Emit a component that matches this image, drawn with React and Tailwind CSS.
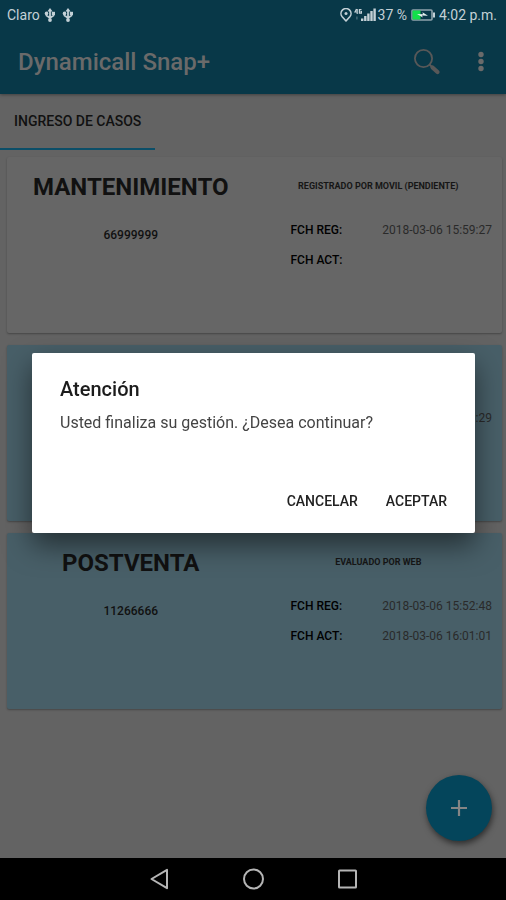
import { useState } from "react";

const cases = [
  {
    id: 1,
    type: "MANTENIMIENTO",
    number: "66999999",
    status: "REGISTRADO POR MOVIL (PENDIENTE)",
    rows: [
      ["FCH REG:", "2018-03-06 15:59:27"],
      ["FCH ACT:", ""],
    ],
    reviewed: false,
  },
  {
    id: 2,
    type: "",
    number: "",
    status: "",
    rows: [["", ":29"]],
    reviewed: true,
  },
  {
    id: 3,
    type: "POSTVENTA",
    number: "11266666",
    status: "EVALUADO POR WEB",
    rows: [
      ["FCH REG:", "2018-03-06 15:52:48"],
      ["FCH ACT:", "2018-03-06 16:01:01"],
    ],
    reviewed: true,
  },
];

function UsbIcon() {
  return (
    <svg viewBox="0 0 12 14" className="w-3 h-3.5" fill="none" stroke="currentColor" strokeWidth="1.8">
      <path d="M6 3v9M2.5 6v1.5L6 10l3.5-2.5V5.5" />
      <path d="M6 0l2.6 3.6H3.4z" fill="currentColor" stroke="none" />
      <circle cx="2.5" cy="5.4" r="1.8" fill="currentColor" stroke="none" />
      <path d="M7.8 3.8h3.2v3.2H7.8z" fill="currentColor" stroke="none" />
      <circle cx="6" cy="12" r="1.9" fill="currentColor" stroke="none" />
    </svg>
  );
}

function StatusBar() {
  return (
    <div className="flex h-[30px] items-center justify-between pl-[7px] pr-[9px] text-sm text-[#c3d0d6]">
      <div className="flex items-center">
        <span>Claro</span>
        <span className="ml-1 flex gap-1.5">
          <UsbIcon />
          <UsbIcon />
        </span>
      </div>
      <div className="flex items-center">
        <svg viewBox="0 0 12 14" className="w-3 h-3.5" fill="none" stroke="currentColor" strokeWidth="1.6">
          <path d="M6 13L2.2 8.8A5 5 0 1 1 9.8 8.8z" strokeLinejoin="round" />
          <circle cx="6" cy="5.6" r="1.5" fill="currentColor" stroke="none" />
        </svg>
        <svg viewBox="0 0 22 14" className="ml-0.5 w-[22px] h-3.5" fill="currentColor">
          <path d="M2.5 1L1 4h2.6M3.2 1v5M7.5 1.6H5.4v3.6h2V3.6H6.4" fill="none" stroke="currentColor" strokeWidth="1.2" />
          <path d="M2.2 8.5h1.4v3H2.2z" opacity="0.35" />
          <path d="M7 10.5h2.4V13H7zM10.1 8h2.4v5h-2.4zM13.2 5.5h2.4V13h-2.4zM16.3 3h2.4v10h-2.4zM19.4 .5h2.4V13h-2.4z" />
        </svg>
        <span className="ml-0.5">37 %</span>
        <svg viewBox="0 0 24 12" className="ml-1 w-6 h-3">
          <rect x="1" y="1" width="20" height="10" rx="1" fill="none" stroke="#8fa3ac" strokeWidth="1.6" />
          <rect x="1.5" y="1.5" width="8" height="9" fill="#12e04a" />
          <rect x="22" y="3.5" width="2" height="5" fill="#c3d0d6" />
          <path d="M6 5l6 .3-.6-2L17 6.8l-6-.2.8 2z" fill="#e6f2ee" />
        </svg>
        <span className="ml-1">4:02 p.m.</span>
      </div>
    </div>
  );
}

function Toolbar() {
  return (
    <div className="flex h-16 items-center justify-between pl-[18px] pr-[11px]">
      <h1 className="text-2xl font-medium text-[#6a6a6a]">Dynamicall Snap+</h1>
      <div className="flex items-center gap-[26px]">
        <button aria-label="Buscar" className="text-[#585858]">
          <svg viewBox="0 0 28 28" className="size-7" fill="none" stroke="currentColor">
            <circle cx="10.5" cy="10.5" r="8.6" strokeWidth="1.8" />
            <path d="M16.5 16.5l3 3" strokeWidth="1.8" />
            <path d="M19.5 19.5l5 4.5" strokeWidth="4.2" strokeLinecap="round" />
          </svg>
        </button>
        <button aria-label="Más opciones" className="text-[#6a6a6a]">
          <svg viewBox="0 0 28 28" className="size-7" fill="currentColor">
            <circle cx="14" cy="6.5" r="2.7" />
            <circle cx="14" cy="13.5" r="2.7" />
            <circle cx="14" cy="20.5" r="2.7" />
          </svg>
        </button>
      </div>
    </div>
  );
}

function CaseCard({ item }) {
  return (
    <article
      className={`flex h-44 rounded-xs pt-3.5 shadow-[0_1px_2px_rgba(0,0,0,0.3)] ${
        item.reviewed ? "bg-[#485f68]" : "bg-[#666]"
      }`}
    >
      <div className="flex-1 text-center">
        <h2 className="min-h-8 text-2xl leading-8 font-bold text-[#111]">{item.type}</h2>
        <p className="mt-6 text-xs leading-4 font-medium text-[#111]">{item.number}</p>
      </div>
      <div className="flex-1">
        <p className="min-h-[30px] text-center text-[9px] leading-[30px] font-bold text-[#161616]">{item.status}</p>
        <dl className="mt-5 flex flex-col gap-3 pr-[10px] pl-9 text-xs leading-[18px]">
          {item.rows.map(([label, value], i) => (
            <div key={i} className="flex justify-between">
              <dt className="font-medium text-black">{label}</dt>
              <dd className="text-[#2a2a2a]">{value}</dd>
            </div>
          ))}
        </dl>
      </div>
    </article>
  );
}

function ConfirmDialog({ onClose }) {
  return (
    <div className="fixed inset-0 flex items-center justify-center pt-[30px] pr-[31px] pb-[44px] pl-8">
      <div
        role="alertdialog"
        aria-labelledby="dialog-title"
        className="w-full max-w-lg rounded-xs bg-white px-7 pt-6 pb-4 text-black shadow-[0_12px_28px_rgba(0,0,0,0.5)]"
      >
        <h2 id="dialog-title" className="text-xl leading-6 font-medium text-[#1c1c1c]">
          Atención
        </h2>
        <p className="mt-3 text-base leading-5 text-[#444]">
          Usted finaliza su gestión. ¿Desea continuar?
        </p>
        <div className="mt-[52px] flex justify-end gap-7 text-sm font-medium text-[#222]">
          <button className="h-8" onClick={onClose}>CANCELAR</button>
          <button className="h-8" onClick={onClose}>ACEPTAR</button>
        </div>
      </div>
    </div>
  );
}

function NavBar() {
  return (
    <nav className="flex h-[42px] items-center justify-center gap-[70px] bg-black text-[#b5b5b5]">
      <button aria-label="Atrás">
        <svg viewBox="0 0 24 24" className="size-6" fill="none" stroke="currentColor" strokeWidth="2">
          <path d="M4.5 12L20 2.8v18.4z" strokeLinejoin="round" />
        </svg>
      </button>
      <button aria-label="Inicio">
        <svg viewBox="0 0 24 24" className="size-6" fill="none" stroke="currentColor" strokeWidth="2">
          <circle cx="12.5" cy="12" r="9.5" />
        </svg>
      </button>
      <button aria-label="Recientes">
        <svg viewBox="0 0 24 24" className="size-6" fill="none" stroke="currentColor" strokeWidth="2">
          <rect x="4" y="3.5" width="17" height="17" rx="0.5" />
        </svg>
      </button>
    </nav>
  );
}

export default function App() {
  const [open, setOpen] = useState(true);

  return (
    <div className="flex min-h-screen flex-col bg-[#636363] font-[Roboto,sans-serif]">
      <header className="bg-[#083848] shadow-[0_1px_3px_rgba(0,0,0,0.35)]">
        <StatusBar />
        <Toolbar />
      </header>

      <div className="flex">
        <button className="h-14 border-b-2 border-[#0b4e68] px-[14px] text-sm font-medium text-[#111]">
          INGRESO DE CASOS
        </button>
      </div>

      <main className="relative flex flex-1 flex-col gap-3 pt-[7px] pr-1 pl-[7px]">
        {cases.map((c) => (
          <CaseCard key={c.id} item={c} />
        ))}
        <button
          aria-label="Agregar"
          className="absolute right-[14px] bottom-[17px] flex size-[66px] items-center justify-center rounded-full bg-[#04455b] text-[#858585] shadow-[1px_3px_6px_rgba(0,0,0,0.55)]"
        >
          <svg viewBox="0 0 18 18" className="size-[18px]" stroke="currentColor" strokeWidth="2.2">
            <path d="M9 1v16M1 9h16" />
          </svg>
        </button>
      </main>

      <NavBar />
      {open && <ConfirmDialog onClose={() => setOpen(false)} />}
    </div>
  );
}
